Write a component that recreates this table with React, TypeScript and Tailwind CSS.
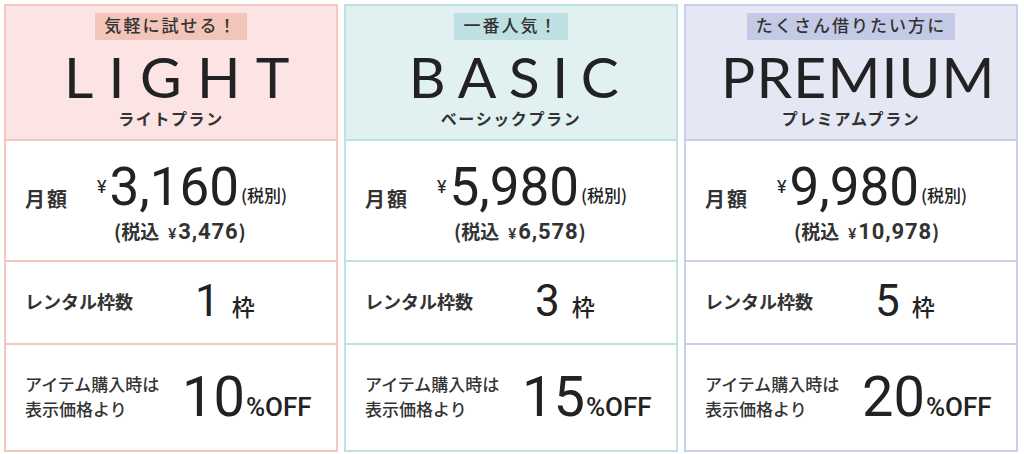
import React from 'react';

interface Plan {
  tag: string;
  name: string;
  kana: string;
  price: string;
  taxIn: string;
  slots: string;
  off: string;
  headerBg: string;
  tagBg: string;
  border: string;
  tracking: string;
}

const plans: Plan[] = [
  {
    tag: '気軽に試せる！',
    name: 'LIGHT',
    kana: 'ライトプラン',
    price: '3,160',
    taxIn: '3,476',
    slots: '1',
    off: '10',
    headerBg: 'bg-[#fbe4e3]',
    tagBg: 'bg-[#f2c4ba]',
    border: 'border-[#f4c6be]',
    tracking: 'tracking-[0.27em] pl-[0.47em]',
  },
  {
    tag: '一番人気！',
    name: 'BASIC',
    kana: 'ベーシックプラン',
    price: '5,980',
    taxIn: '6,578',
    slots: '3',
    off: '15',
    headerBg: 'bg-[#e1f0f1]',
    tagBg: 'bg-[#bfe0e2]',
    border: 'border-[#bfe1e4]',
    tracking: 'tracking-[0.22em] pl-[0.32em]',
  },
  {
    tag: 'たくさん借りたい方に',
    name: 'PREMIUM',
    kana: 'プレミアムプラン',
    price: '9,980',
    taxIn: '10,978',
    slots: '5',
    off: '20',
    headerBg: 'bg-[#e5e7f4]',
    tagBg: 'bg-[#c4cae6]',
    border: 'border-[#c9cfe9]',
    tracking: 'tracking-[0.02em] pl-[0.26em]',
  },
];

const font = { fontFamily: 'Roboto, "Noto Sans CJK JP", sans-serif' };
const jp = { fontFamily: '"Noto Sans CJK JP", sans-serif' };

const PlanCard: React.FC<{ plan: Plan }> = ({ plan }) => (
  <div className={`w-[334px] h-[448px] border-2 ${plan.border} flex flex-col bg-white`}>
    <div className={`h-[135px] ${plan.headerBg} border-b-2 ${plan.border} flex flex-col items-center pt-[7px]`}>
      <div className={`${plan.tagBg} h-[27px] px-[9px] flex items-center text-[17px] font-medium tracking-[0.12em] text-[#333]`}>
        {plan.tag}
      </div>
      <div
        className={`mt-[10px] text-[57px] leading-[52px] text-[#222] ${plan.tracking}`}
        style={{ fontFamily: 'Lato, sans-serif' }}
      >
        {plan.name}
      </div>
      <div className="mt-[10px] text-[16px] font-bold tracking-[0.1em] text-[#333] leading-none">{plan.kana}</div>
    </div>

    <div className={`h-[121px] border-b-2 ${plan.border} flex items-center pl-[19px]`}>
      <div className="text-[20px] font-bold text-[#333] tracking-[0.1em] w-[72px] mt-[-2px]">月額</div>
      <div className="flex flex-col items-start">
        <div className="flex items-baseline text-[#222]">
          <span className="text-[18px] mr-[3px] relative top-[-12px]">¥</span>
          <span className="text-[53px] leading-[56px] font-normal">{plan.price}</span>
          <span className="text-[17px] font-medium relative top-[-3px] ml-[2px]" style={jp}>(税別)</span>
        </div>
        <div className="text-[19px] font-bold text-[#333] leading-none mt-[6px] ml-[17px] flex items-baseline" style={jp}>
          <span>(税込</span>
          <span className="text-[15px] font-medium ml-[9px] mr-[2px]" style={font}>¥</span>
          <span className="text-[22px] tracking-[0.04em]" style={font}>{plan.taxIn}</span>
          <span>)</span>
        </div>
      </div>
    </div>

    <div className={`h-[83px] border-b-2 ${plan.border} flex items-center pl-[19px]`}>
      <div className="text-[18px] font-bold text-[#333] w-[170px]">レンタル枠数</div>
      <div className="flex items-baseline text-[#222]">
        <span className="text-[44px] leading-none">{plan.slots}</span>
        <span className="text-[23px] font-medium ml-[12px]">枠</span>
      </div>
    </div>

    <div className="flex-1 flex items-center pl-[19px]">
      <div className="text-[17px] font-medium text-[#333] leading-[25px] w-[157px]">
        アイテム購入時は
        <br />
        表示価格より
      </div>
      <div className="flex items-baseline text-[#222]">
        <span className="text-[56px] leading-none">{plan.off}</span>
        <span className="text-[26px] font-medium ml-[1px]">%OFF</span>
      </div>
    </div>
  </div>
);

const App: React.FC = () => {
  return (
    <div className="w-[1024px] h-[454px] bg-white pt-[4px] pl-[4px] flex gap-[6px]" style={font}>
      {plans.map((p) => (
        <PlanCard key={p.name} plan={p} />
      ))}
    </div>
  );
};

export default App;
